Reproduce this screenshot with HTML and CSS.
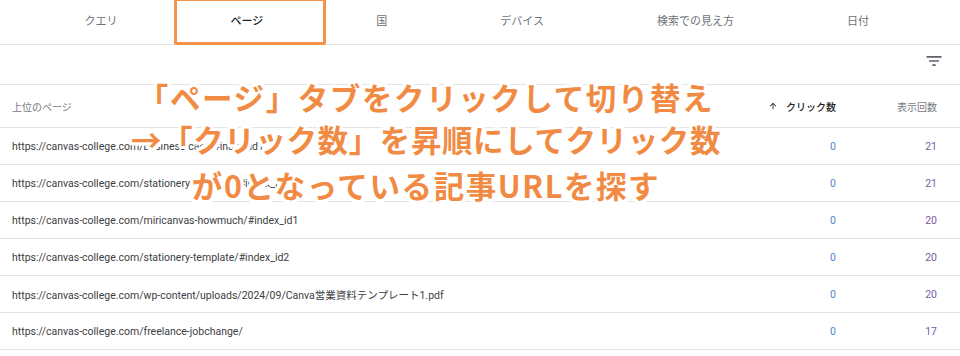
FILE: index.html
```html
<!DOCTYPE html>
<html lang="ja">
<head>
<meta charset="utf-8">
<title>ページ</title>
<link rel="stylesheet" href="styles.css">
</head>
<body>
<div class="page">
  <nav class="tabs">
    <div class="tab">クエリ</div>
    <div class="tab active">ページ<span class="highlight"></span></div>
    <div class="tab">国</div>
    <div class="tab">デバイス</div>
    <div class="tab">検索での見え方</div>
    <div class="tab">日付</div>
  </nav>
  <div class="toolbar">
    <svg class="filter-icon" viewBox="0 0 24 24"><path d="M10 18h4v-2h-4v2zM3 6v2h18V6H3zm3 7h12v-2H6v2z"/></svg>
  </div>
  <div class="table">
    <div class="row head">
      <div class="c-page">上位のページ</div>
      <div class="c-num sorted"><svg class="arrow" viewBox="0 0 24 24"><path d="M4 12l1.41 1.41L11 7.83V20h2V7.83l5.58 5.59L20 12l-8-8-8 8z"/></svg>クリック数</div>
      <div class="c-num">表示回数</div>
    </div>
    <div class="row">
      <div class="c-page">https://canvas-college.com/business-card/#index_id1</div>
      <div class="c-num clicks">0</div>
      <div class="c-num imps">21</div>
    </div>
    <div class="row">
      <div class="c-page">https://canvas-college.com/stationery-template/#index_id1</div>
      <div class="c-num clicks">0</div>
      <div class="c-num imps">21</div>
    </div>
    <div class="row">
      <div class="c-page">https://canvas-college.com/miricanvas-howmuch/#index_id1</div>
      <div class="c-num clicks">0</div>
      <div class="c-num imps">20</div>
    </div>
    <div class="row">
      <div class="c-page">https://canvas-college.com/stationery-template/#index_id2</div>
      <div class="c-num clicks">0</div>
      <div class="c-num imps">20</div>
    </div>
    <div class="row">
      <div class="c-page">https://canvas-college.com/wp-content/uploads/2024/09/Canva営業資料テンプレート1.pdf</div>
      <div class="c-num clicks">0</div>
      <div class="c-num imps">20</div>
    </div>
    <div class="row">
      <div class="c-page">https://canvas-college.com/freelance-jobchange/</div>
      <div class="c-num clicks">0</div>
      <div class="c-num imps">17</div>
    </div>
  </div>
  <div class="note">
    <div>「ページ」タブをクリックして切り替え</div>
    <div class="l2">→「クリック数」を昇順にしてクリック数</div>
    <div>が0となっている記事URLを探す</div>
  </div>
</div>
</body>
</html>
```
FILE: styles.css
```css
* { box-sizing: border-box; }
html, body { margin: 0; padding: 0; background: #fff; }
body {
  font-family: Roboto, "Noto Sans CJK JP", sans-serif;
  color: #3c4043;
  overflow: hidden;
}
.page { position: relative; width: 960px; height: 356px; }

.tabs {
  display: flex;
  height: 45px;
  padding-left: 28px;
  border-bottom: 1px solid #e3e3e3;
}
.tab {
  position: relative;
  display: flex;
  align-items: center;
  padding: 0 56.5px 4px;
  font-family: "Noto Sans CJK JP", sans-serif;
  font-size: 11px;
  color: #6f7276;
}
.tab.active { color: #202124; font-weight: 500; }
.highlight {
  position: absolute;
  left: 0;
  right: -6px;
  top: -2px;
  bottom: -1px;
  border: 3.5px solid #f5924c;
  border-radius: 2px;
}

.toolbar {
  height: 39px;
  display: flex;
  justify-content: flex-end;
  align-items: flex-start;
  padding: 6px 16px 0 0;
}
.filter-icon { width: 20px; height: 20px; fill: #5f6368; }

.table { border-top: 1px solid #e3e3e3; }
.row {
  display: grid;
  grid-template-columns: 1fr 120px 101px;
  align-items: center;
  height: 37px;
  padding: 0 23px 0 12px;
  border-bottom: 1px solid #e3e3e3;
  font-size: 10.5px;
}
.row.head {
  height: 43px;
  font-family: "Noto Sans CJK JP", sans-serif;
  font-size: 10px;
  color: #77797d;
}
.c-page { white-space: nowrap; overflow: hidden; }
.c-num { text-align: right; }
.sorted {
  display: flex;
  justify-content: flex-end;
  align-items: center;
  color: #202124;
  font-weight: 500;
}
.arrow { width: 10px; height: 10px; fill: #202124; margin-right: 8px; }
.clicks { color: #4f86d1; }
.imps { color: #7a5aa6; }

.note {
  position: absolute;
  left: 100px;
  top: 75px;
  width: 652px;
  text-align: center;
  font-family: "Noto Sans CJK JP", sans-serif;
  font-weight: 700;
  font-size: 30.5px;
  letter-spacing: 1.6px;
  line-height: 44px;
  color: #f18b44;
  white-space: nowrap;
  text-shadow:
    3px 0 0 #fff, -3px 0 0 #fff, 0 3px 0 #fff, 0 -3px 0 #fff,
    2px 2px 0 #fff, -2px 2px 0 #fff, 2px -2px 0 #fff, -2px -2px 0 #fff,
    3px 2px 0 #fff, -3px 2px 0 #fff, 3px -2px 0 #fff, -3px -2px 0 #fff,
    2px 3px 0 #fff, -2px 3px 0 #fff, 2px -3px 0 #fff, -2px -3px 0 #fff;
}
.note .l2 { letter-spacing: 0.6px; margin-top: -2px; margin-bottom: 2px; }
```
